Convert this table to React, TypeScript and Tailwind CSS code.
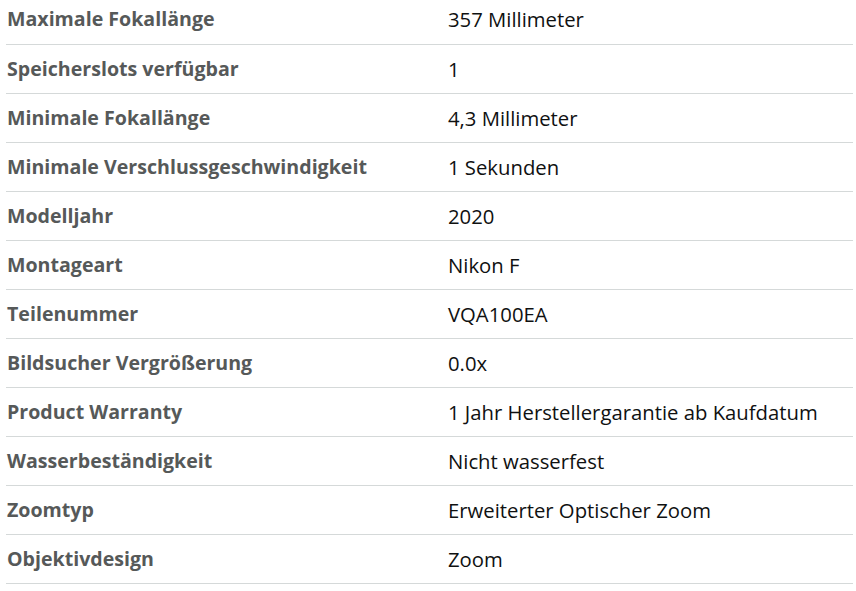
import React from 'react';

const specs: [string, string][] = [
  ['Maximale Fokallänge', '357 Millimeter'],
  ['Speicherslots verfügbar', '1'],
  ['Minimale Fokallänge', '4,3 Millimeter'],
  ['Minimale Verschlussgeschwindigkeit', '1 Sekunden'],
  ['Modelljahr', '2020'],
  ['Montageart', 'Nikon F'],
  ['Teilenummer', 'VQA100EA'],
  ['Bildsucher Vergrößerung', '0.0x'],
  ['Product Warranty', '1 Jahr Herstellergarantie ab Kaufdatum'],
  ['Wasserbeständigkeit', 'Nicht wasserfest'],
  ['Zoomtyp', 'Erweiterter Optischer Zoom'],
  ['Objektivdesign', 'Zoom'],
];

export default function App() {
  return (
    <div className="bg-white w-[856px] h-[591px] overflow-hidden" style={{ fontFamily: '"Open Sans", Arial, sans-serif' }}>
      <table className="-mt-[5px] ml-[6px] w-[847px] border-collapse leading-[26px]">
        <tbody>
          {specs.map(([label, value]) => (
            <tr key={label} className="border-b border-[#d5d9d9]">
              <td className="w-[442px] h-[49px] pl-px py-0 align-middle text-[19.6px] font-bold text-[#565959]">{label}</td>
              <td className="h-[49px] py-0 align-middle text-[20.3px] text-[#0f1111]">{value}</td>
            </tr>
          ))}
        </tbody>
      </table>
    </div>
  );
}
